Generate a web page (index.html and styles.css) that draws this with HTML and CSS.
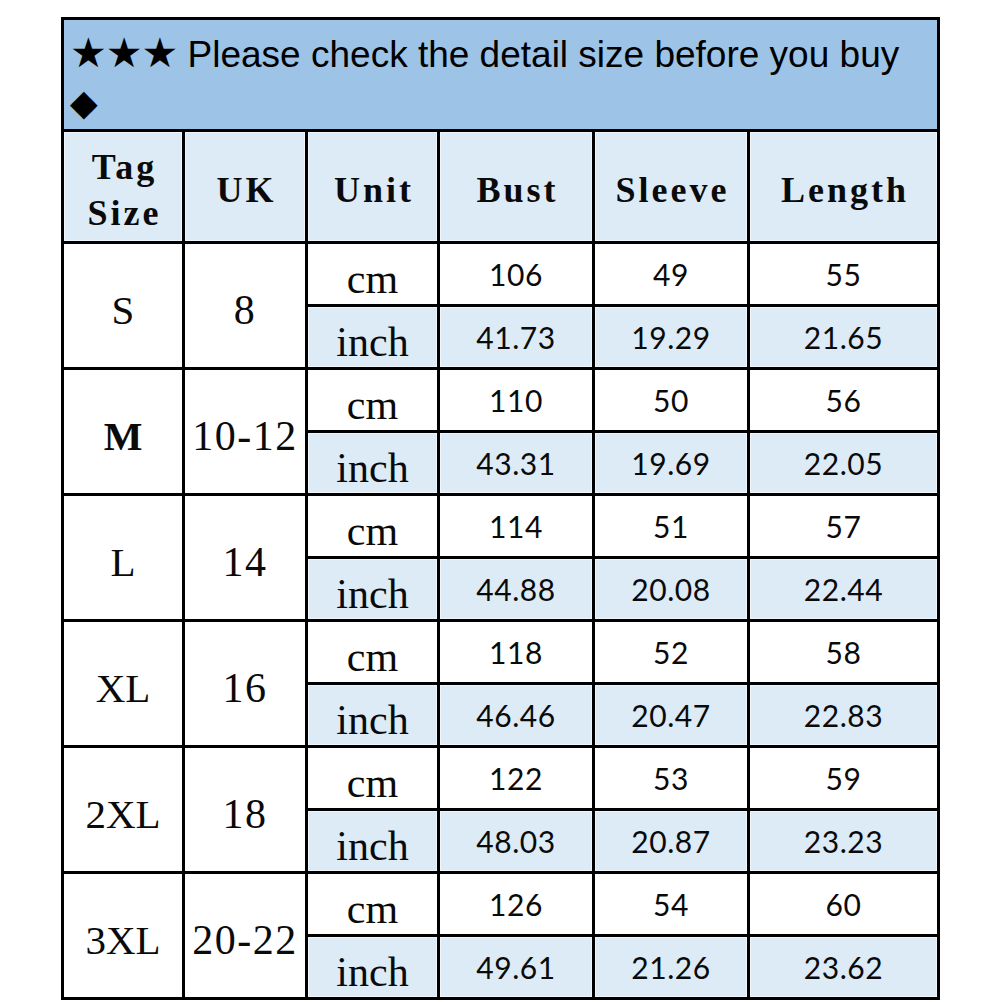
FILE: index.html
```html
<!DOCTYPE html>
<html>
<head>
<meta charset="utf-8">
<link rel="stylesheet" href="styles.css">
</head>
<body>
<div class="chart">
  <div class="banner"><span class="stars">★★★</span> Please check the detail size before you buy<br><span class="diamond">◆</span></div>

  <div class="hd tag">Tag<br>Size</div>
  <div class="hd">UK</div>
  <div class="hd">Unit</div>
  <div class="hd">Bust</div>
  <div class="hd">Sleeve</div>
  <div class="hd">Length</div>

  <div class="size">S</div><div class="uk">8</div>
  <div class="unit">cm</div><div class="num">106</div><div class="num">49</div><div class="num">55</div>
  <div class="unit alt">inch</div><div class="num alt">41.73</div><div class="num alt">19.29</div><div class="num alt">21.65</div>

  <div class="size bold">M</div><div class="uk">10-12</div>
  <div class="unit">cm</div><div class="num">110</div><div class="num">50</div><div class="num">56</div>
  <div class="unit alt">inch</div><div class="num alt">43.31</div><div class="num alt">19.69</div><div class="num alt">22.05</div>

  <div class="size">L</div><div class="uk">14</div>
  <div class="unit">cm</div><div class="num">114</div><div class="num">51</div><div class="num">57</div>
  <div class="unit alt">inch</div><div class="num alt">44.88</div><div class="num alt">20.08</div><div class="num alt">22.44</div>

  <div class="size">XL</div><div class="uk">16</div>
  <div class="unit">cm</div><div class="num">118</div><div class="num">52</div><div class="num">58</div>
  <div class="unit alt">inch</div><div class="num alt">46.46</div><div class="num alt">20.47</div><div class="num alt">22.83</div>

  <div class="size">2XL</div><div class="uk">18</div>
  <div class="unit">cm</div><div class="num">122</div><div class="num">53</div><div class="num">59</div>
  <div class="unit alt">inch</div><div class="num alt">48.03</div><div class="num alt">20.87</div><div class="num alt">23.23</div>

  <div class="size">3XL</div><div class="uk">20-22</div>
  <div class="unit">cm</div><div class="num">126</div><div class="num">54</div><div class="num">60</div>
  <div class="unit alt">inch</div><div class="num alt">49.61</div><div class="num alt">21.26</div><div class="num alt">23.62</div>
</div>
</body>
</html>
```
FILE: styles.css
```css
html, body {
  margin: 0;
  padding: 0;
  background: #ffffff;
}

body {
  padding: 17px 0 0 61px;
  color: #0a0a0a;
}

.chart {
  width: 879px;
  box-sizing: border-box;
  display: grid;
  grid-template-columns: 118px 120px 129px 152px 152px 187px;
  grid-template-rows: 109px 109px repeat(12, 60px);
  gap: 3px;
  padding: 3px;
  background: #000;
}

.chart > div {
  background: #fff;
  display: flex;
  align-items: center;
  justify-content: center;
  text-align: center;
}

.banner {
  grid-column: 1 / -1;
  background: #9dc3e6 !important;
  display: block !important;
  text-align: left !important;
  font-family: "Liberation Sans", Arial, sans-serif;
  font-size: 37px;
  line-height: 48px;
  padding: 9px 0 0 6px;
  color: #000;
}

.stars {
  font-family: "DejaVu Sans", sans-serif;
  font-size: 41px;
  letter-spacing: -1px;
}

.diamond {
  font-family: "DejaVu Sans", sans-serif;
  font-size: 36px;
}

.hd {
  background: #ddebf7 !important;
  box-shadow: inset 0 0 0 1px #eef5fb;
  font-family: "Liberation Serif", "Times New Roman", serif;
  font-weight: bold;
  font-size: 36px;
  letter-spacing: 3px;
  line-height: 46px;
  padding: 6px 0 0 3px;
  box-sizing: border-box;
}

.size, .uk {
  grid-row: span 2;
  font-family: "Liberation Serif", "Times New Roman", serif;
  font-size: 41px;
  padding-top: 8px;
  box-sizing: border-box;
}

.size.bold {
  font-weight: bold;
}

.uk {
  font-size: 42px;
  letter-spacing: 1.5px;
}

.unit {
  font-family: "Liberation Serif", "Times New Roman", serif;
  font-size: 42px;
  padding-top: 10px;
  box-sizing: border-box;
}

.num {
  font-family: Lato, "Open Sans", sans-serif;
  font-size: 30px;
  letter-spacing: 0.6px;
}

.alt {
  background: #ddebf7 !important;
  box-shadow: inset 0 0 0 1px #eef5fb;
}
```
